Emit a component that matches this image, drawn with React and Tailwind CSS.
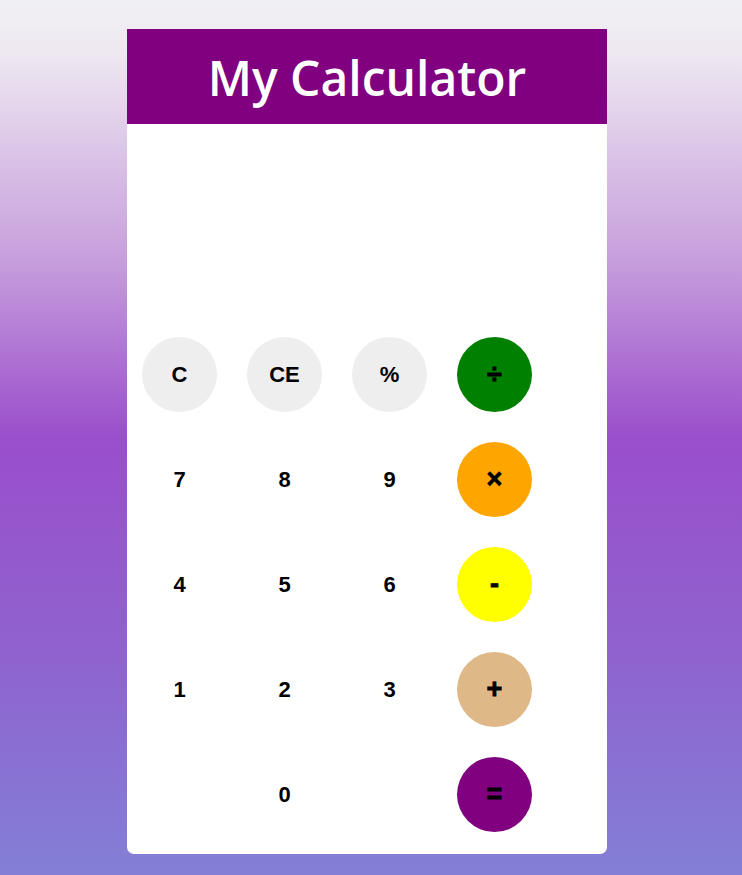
const keys = [
  { label: 'C', bg: 'bg-[#eeeeee]' },
  { label: 'CE', bg: 'bg-[#eeeeee]' },
  { label: '%', bg: 'bg-[#eeeeee]' },
  { label: '÷', bg: 'bg-[#008000]', op: true },
  { label: '7', bg: 'bg-white' },
  { label: '8', bg: 'bg-white' },
  { label: '9', bg: 'bg-white' },
  { label: '×', bg: 'bg-[#ffa500]', op: true },
  { label: '4', bg: 'bg-white' },
  { label: '5', bg: 'bg-white' },
  { label: '6', bg: 'bg-white' },
  { label: '-', bg: 'bg-[#ffff00]', op: true },
  { label: '1', bg: 'bg-white' },
  { label: '2', bg: 'bg-white' },
  { label: '3', bg: 'bg-white' },
  { label: '+', bg: 'bg-[#deb887]', op: true },
  { label: '', bg: 'bg-white' },
  { label: '0', bg: 'bg-white' },
  { label: '', bg: 'bg-white' },
  { label: '=', bg: 'bg-[#800080]', op: true },
];

export default function App() {
  return (
    <div className="min-h-[875px] w-full bg-[linear-gradient(to_bottom,#f1f0f4_0%,#eee8f1_6%,#c69ddc_30%,#9a4ecb_50%,#8f63cf_75%,#837fd6_100%)] pt-[29px] pb-[21px]">
      <div className="ml-[127px] w-[480px] bg-white rounded-b-[7px] overflow-hidden">
        {/* Header */}
        <div className="h-[95px] bg-[#800080] flex items-center justify-center">
          <h1 className="text-white text-[48px] font-semibold leading-none font-['Open_Sans',sans-serif] pt-[3px]">
            My Calculator
          </h1>
        </div>

        {/* Display */}
        <div className="h-[213px]" />

        {/* Keypad */}
        <div className="grid grid-cols-[repeat(4,75px)] gap-[30px] pl-[15px] pb-[22px]">
          {keys.map((k, i) => (
            <button
              key={i}
              className={`w-[75px] h-[75px] rounded-full ${k.bg} flex items-center justify-center text-black font-bold font-['Liberation_Sans',Arial,sans-serif] ${k.op ? 'text-[27px] [-webkit-text-stroke:0.8px_black]' : 'text-[22px]'}`}
            >
              {k.label}
            </button>
          ))}
        </div>
      </div>
    </div>
  );
}
